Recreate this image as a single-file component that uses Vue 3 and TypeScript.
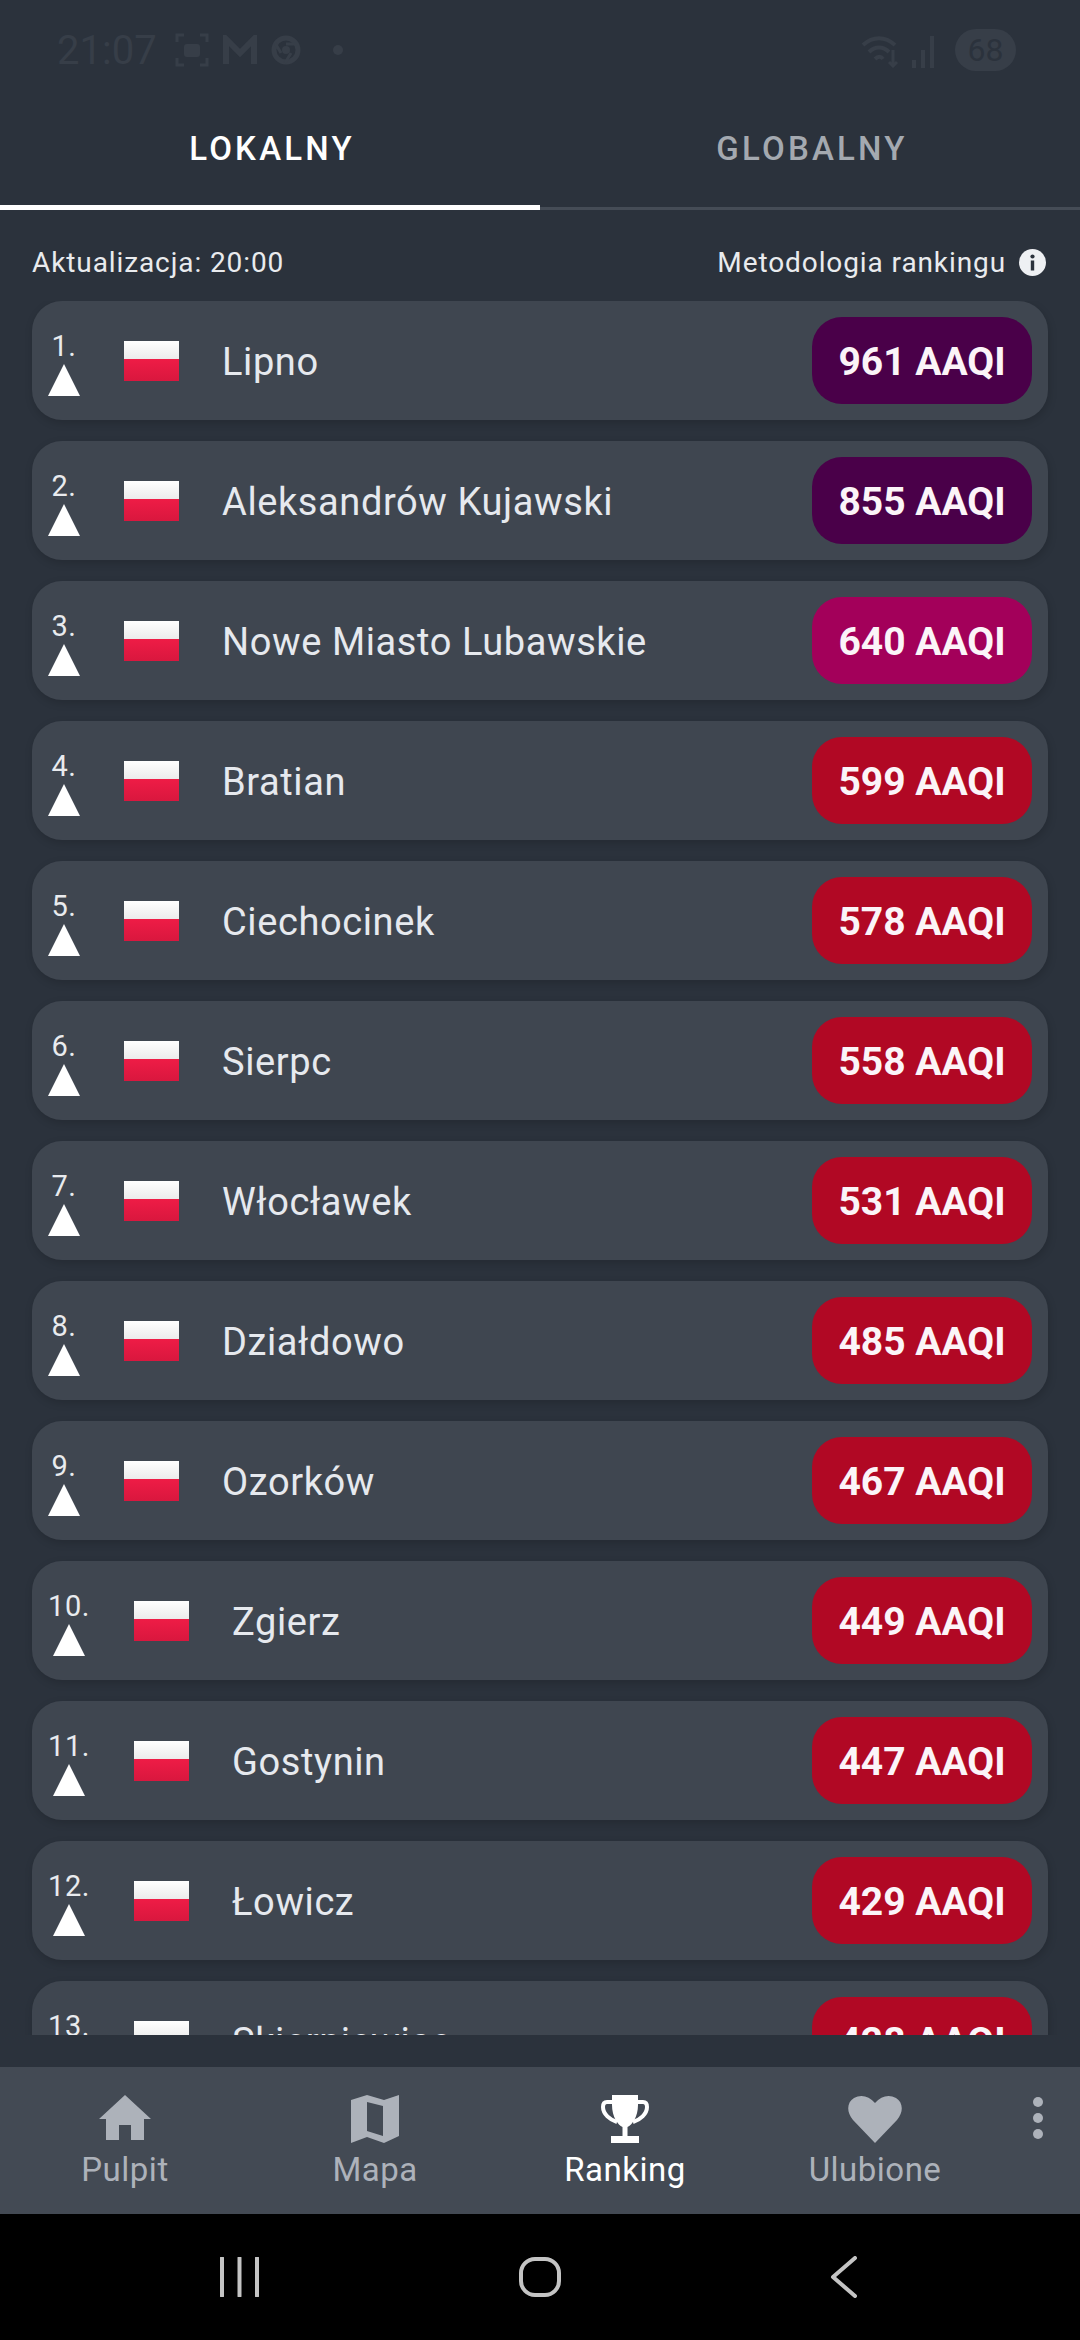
<script setup lang="ts">
import { computed } from 'vue'

interface City {
  name: string
  aqi: number
}

const cities: City[] = [
  { name: 'Lipno', aqi: 961 },
  { name: 'Aleksandrów Kujawski', aqi: 855 },
  { name: 'Nowe Miasto Lubawskie', aqi: 640 },
  { name: 'Bratian', aqi: 599 },
  { name: 'Ciechocinek', aqi: 578 },
  { name: 'Sierpc', aqi: 558 },
  { name: 'Włocławek', aqi: 531 },
  { name: 'Działdowo', aqi: 485 },
  { name: 'Ozorków', aqi: 467 },
  { name: 'Zgierz', aqi: 449 },
  { name: 'Gostynin', aqi: 447 },
  { name: 'Łowicz', aqi: 429 },
  { name: 'Skierniewice', aqi: 428 },
]

// colour of the pill follows the AQI band
function level(aqi: number): string {
  if (aqi > 800) return 'hazard'
  if (aqi > 600) return 'severe'
  return 'bad'
}

const rows = computed(() => cities.map((c, i) => ({ ...c, rank: i + 1, level: level(c.aqi) })))
</script>

<template>
  <div class="screen">
    <div class="status">
      <div class="status-side">
        <span class="clock">21:07</span>
        <svg class="st-icon" width="34" height="34" viewBox="0 0 34 34">
          <path d="M2 9V2h7M25 2h7v7M2 25v7h7M25 32h7v-7" fill="none" stroke="#373e48" stroke-width="3" />
          <rect x="9" y="11" width="16" height="13" rx="3" fill="#373e48" />
        </svg>
        <svg class="st-icon" width="34" height="30" viewBox="0 0 34 30">
          <path d="M3 29V4l14 14L31 4v25" fill="none" stroke="#373e48" stroke-width="6" />
        </svg>
        <svg class="st-icon" width="30" height="30" viewBox="0 0 30 30">
          <circle cx="15" cy="15" r="12" fill="none" stroke="#373e48" stroke-width="5" />
          <circle cx="15" cy="15" r="4" fill="#373e48" />
          <path d="M15 9h12M10 18L4 8M20 18l-6 10" stroke="#373e48" stroke-width="3" />
        </svg>
        <span class="st-dot"></span>
      </div>
      <div class="status-side">
        <svg width="38" height="36" viewBox="0 0 38 36">
          <path d="M2 13c10-9 22-9 32 0M8 20c6-6 14-6 20 0M14 27c3-3 6-3 8 0" fill="none" stroke="#373e48" stroke-width="4" />
          <path d="M32 18v16M28 30l4 4 4-4" fill="none" stroke="#373e48" stroke-width="3" />
        </svg>
        <svg class="st-signal" width="24" height="36" viewBox="0 0 24 36">
          <path d="M1 36v-8h4v8zM10 36V18h4v18zM19 36V4h4v32z" fill="#373e48" />
        </svg>
        <span class="battery">68</span>
      </div>
    </div>

    <div class="tabs">
      <div class="tab active">LOKALNY</div>
      <div class="tab">GLOBALNY</div>
    </div>

    <div class="info">
      <span>Aktualizacja: 20:00</span>
      <span class="method">
        Metodologia rankingu
        <svg width="27" height="27" viewBox="0 0 27 27">
          <circle cx="13.5" cy="13.5" r="13.5" fill="#eef0f3" />
          <rect x="11.8" y="11.5" width="3.4" height="10" fill="#2b323c" />
          <circle cx="13.5" cy="7.5" r="2.1" fill="#2b323c" />
        </svg>
      </span>
    </div>

    <div class="list">
      <div v-for="row in rows" :key="row.rank" class="row">
        <div class="rank">
          <span class="rank-no">{{ row.rank }}.</span>
          <svg width="32" height="32" viewBox="0 0 32 32"><path d="M16 0l16 32H0z" fill="#fff" /></svg>
        </div>
        <div class="flag"></div>
        <div class="name">{{ row.name }}</div>
        <div class="pill" :class="row.level">{{ row.aqi }} AAQI</div>
      </div>
    </div>

    <nav class="nav">
      <div class="nav-item">
        <svg width="52" height="48" viewBox="0 0 52 48">
          <path d="M26 0l26 24h-7v21H32V30H20v15H7V24H0z" fill="#adb2ba" />
        </svg>
        <span>Pulpit</span>
      </div>
      <div class="nav-item">
        <svg width="48" height="48" viewBox="0 0 48 48">
          <path fill-rule="evenodd" d="M0 5l16-5 17 5 15-5v41l-15 7-17-6-16 6zM16 7v29l16 5V11z" fill="#adb2ba" />
        </svg>
        <span>Mapa</span>
      </div>
      <div class="nav-item on">
        <svg width="48" height="48" viewBox="0 0 48 48">
          <path d="M11 0H37V10C37 22 31 30 26.500 32V41H38V48H10V41H21.500V32C17 30 11 22 11 10Z" fill="#fff" />
          <path d="M12 7H6C3 7 2 9 2 12 2 19 9 25 16 27M36 7H42C45 7 46 9 46 12 46 19 39 25 32 27" fill="none" stroke="#fff" stroke-width="4" />
        </svg>
        <span>Ranking</span>
      </div>
      <div class="nav-item">
        <svg width="54" height="48" viewBox="0 0 54 48">
          <path d="M27 48L5 25C-2 17-1 7 6 3c7-4 15-2 21 5 6-7 14-9 21-5 7 4 8 14 1 22z" fill="#adb2ba" />
        </svg>
        <span>Ulubione</span>
      </div>
      <div class="more">
        <i></i><i></i><i></i>
      </div>
    </nav>

    <div class="sysbar">
      <svg width="41" height="40" viewBox="0 0 41 40">
        <path d="M3 1v38M20.500 1v38M38 1v38" stroke="#c4c4c4" stroke-width="4" stroke-linecap="round" />
      </svg>
      <svg class="sys-home" width="42" height="40" viewBox="0 0 42 40">
        <rect x="2" y="2" width="38" height="36" rx="14" fill="none" stroke="#c4c4c4" stroke-width="4" />
      </svg>
      <svg class="sys-back" width="28" height="42" viewBox="0 0 28 42">
        <path d="M25 2L3 21l22 19" fill="none" stroke="#c4c4c4" stroke-width="4" stroke-linecap="round" stroke-linejoin="round" />
      </svg>
    </div>
  </div>
</template>

<style>
html, body {
  margin: 0;
  background: #2b323c;
}
</style>

<style scoped>
.screen {
  width: 1080px;
  height: 2340px;
  display: flex;
  flex-direction: column;
  background: #2b323c;
  font-family: Roboto, "Liberation Sans", sans-serif;
  overflow: hidden;
}

/* status bar - barely visible in the reference */
.status {
  height: 100px;
  flex: none;
  padding: 0 64px 0 57px;
  box-sizing: border-box;
  display: flex;
  align-items: center;
  justify-content: space-between;
}

.status-side {
  display: flex;
  align-items: center;
}

.clock {
  font-size: 40px;
  color: #373e48;
  margin-right: 18px;
}

.st-icon {
  margin-right: 14px;
}

.st-dot {
  width: 10px;
  height: 10px;
  margin-left: 18px;
  border-radius: 50%;
  background: #373e48;
}

.st-signal {
  margin: 0 20px 0 12px;
}

.battery {
  width: 61px;
  height: 42px;
  border-radius: 21px;
  background: #373e48;
  color: #2b323c;
  font-size: 32px;
  text-align: center;
  line-height: 42px;
}

.tabs {
  height: 110px;
  flex: none;
  display: flex;
}

.tab {
  flex: 1;
  padding-top: 29px;
  padding-left: 4px;
  box-sizing: border-box;
  text-align: center;
  font-size: 33px;
  font-weight: 500;
  letter-spacing: 3.2px;
  color: #a4a9b0;
  border-bottom: 3px solid #454c56;
}

.tab.active {
  color: #fff;
  border-bottom: 5px solid #fff;
}

.info {
  height: 91px;
  flex: none;
  padding: 14px 34px 0 32px;
  box-sizing: border-box;
  display: flex;
  align-items: center;
  justify-content: space-between;
  font-size: 28px;
  letter-spacing: 0.9px;
  color: #e9ebee;
}

.method {
  display: flex;
  align-items: center;
  gap: 13px;
}

.list {
  height: 1734px;
  flex: none;
  padding: 0 32px;
  box-sizing: border-box;
  display: flex;
  flex-direction: column;
  gap: 21px;
  overflow: hidden;
}

.row {
  height: 119px;
  flex: none;
  padding: 0 16px;
  border-radius: 30px;
  background: #3f4650;
  box-shadow: 1px 3px 8px rgba(0, 0, 0, 0.16);
  display: flex;
  align-items: center;
}

.rank {
  display: flex;
  flex-direction: column;
  align-items: center;
  min-width: 32px;
  margin-right: 44px;
  padding-top: 6px;
}

.rank-no {
  font-size: 29px;
  line-height: 30px;
  letter-spacing: 0.6px;
  color: #e9ebee;
  margin-bottom: 3px;
}

.flag {
  width: 55px;
  height: 40px;
  flex: none;
  margin-right: 43px;
  background: linear-gradient(#ffffff 0, #ebebeb 46%, #ee1c46 46%, #d9173e 100%);
}

.name {
  flex: 1;
  padding-top: 2px;
  font-size: 38px;
  letter-spacing: 0.6px;
  color: #e6e9ee;
}

.pill {
  width: 220px;
  height: 87px;
  padding-top: 2px;
  box-sizing: border-box;
  border-radius: 30px;
  display: flex;
  align-items: center;
  justify-content: center;
  font-size: 39px;
  font-weight: 700;
  color: #fbf4f8;
}

.pill.hazard {
  background: #4a0049;
}

.pill.severe {
  background: #a3005a;
}

.pill.bad {
  background: #b10824;
}

.nav {
  height: 147px;
  flex: none;
  margin-top: 32px;
  background: #434a54;
  display: flex;
}

.nav-item {
  width: 250px;
  padding-top: 28px;
  box-sizing: border-box;
  display: flex;
  flex-direction: column;
  align-items: center;
  gap: 5px;
  font-size: 33px;
  letter-spacing: 0.5px;
  line-height: 44px;
  color: #adb2ba;
}

.nav-item.on {
  color: #fff;
}

.more {
  flex: 1;
  padding: 30px 4px 0 0;
  display: flex;
  flex-direction: column;
  align-items: center;
  gap: 6px;
  box-sizing: border-box;
}

.more i {
  width: 10px;
  height: 10px;
  border-radius: 50%;
  background: #adb2ba;
}

.sysbar {
  flex: 1;
  background: #000;
  padding-left: 219px;
  display: flex;
  align-items: center;
}

.sys-home {
  margin-left: 259px;
}

.sys-back {
  margin-left: 269px;
}
</style>
